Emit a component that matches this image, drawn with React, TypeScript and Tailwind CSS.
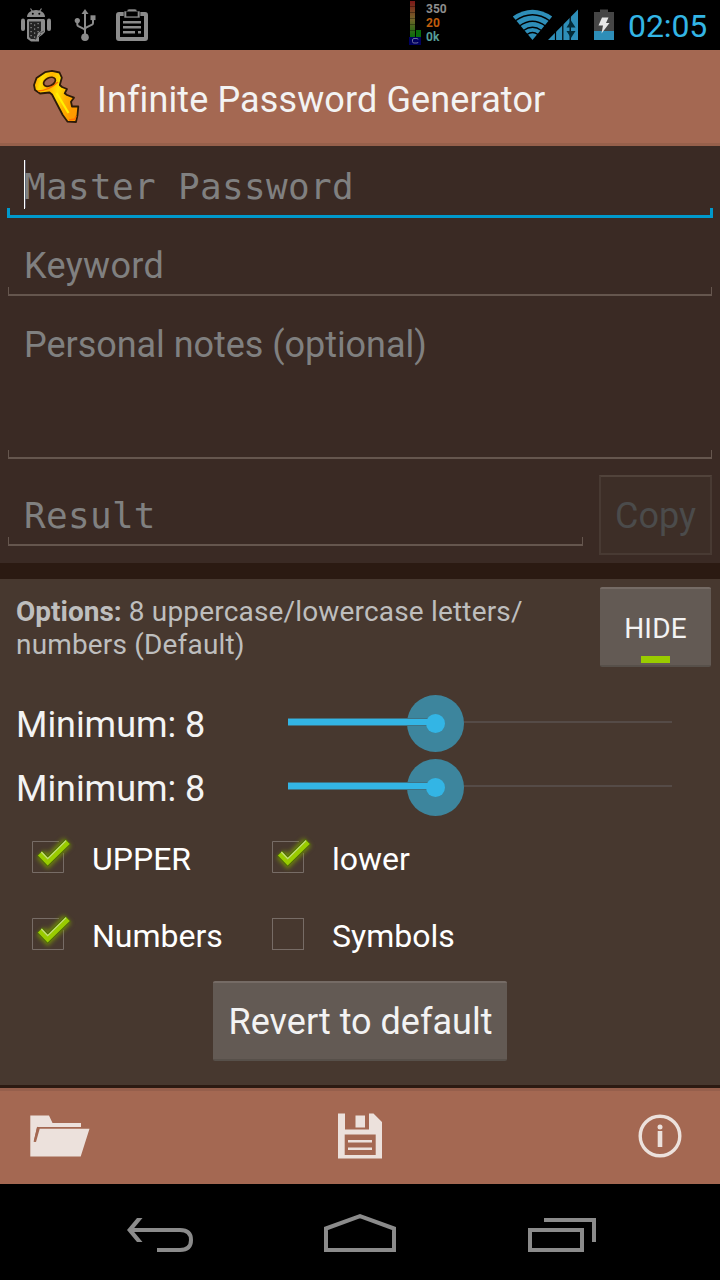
import React from "react";

const SANS = "font-['Roboto',sans-serif]";
const MONO = "font-['DejaVu_Sans_Mono',monospace]";

function StatusBar() {
  return (
    <div className="flex h-[50px] bg-black">
      <svg className="w-[400px] h-[50px] shrink-0" viewBox="0 0 400 50">
        <g fill="#8c8c8c" stroke="none">
          <path d="M27 17c0-4 4-7 9-7s9 3 9 7z" />
          <path d="M30.5 8.5l2 3M41.5 8.5l-2 3" stroke="#8c8c8c" strokeWidth="1.2" />
          <rect x="21" y="18.500" width="4" height="12.500" rx="2" />
          <rect x="47" y="18.500" width="4" height="12.500" rx="2" />
          <path d="M29 19h14c1.500 0 2 .5 2 2v11l-3 3-3 2v4.500h-8l-4-3V21c0-1.500.5-2 2-2z" />
        </g>
        <path d="M29 21.500h12V31l-3 2-2 6h-5l-2-2z" fill="#242424" />
        <g fill="#999">
          {[23, 27, 31, 35].map((y) => (
            <React.Fragment key={y}>
              <rect x="30.500" y={y} width="1.200" height="1.200" />
              <rect x="34" y={y + 1.5} width="1.200" height="1.200" />
              <rect x="37.500" y={y} width="1.200" height="1.200" />
            </React.Fragment>
          ))}
        </g>
        <path d="M35 40l2-3M38 37l3-3M40 33l4-2" stroke="#444" strokeWidth=".8" />
        <circle cx="32.800" cy="13.800" r="1" fill="#000" />
        <circle cx="39.300" cy="13.800" r="1" fill="#000" />

        <g fill="#8c8c8c">
          <path d="M85 9l3.500 5h-7z" />
          <circle cx="85" cy="37.300" r="3.800" />
          <circle cx="77.300" cy="20.500" r="2.600" />
          <rect x="90.500" y="15.300" width="5" height="4.800" />
        </g>
        <path d="M85 13v22M77.300 21v3.500q0 1 1 1.600l5 2.600q1.700.8 1.700 2M93 19v4q0 1-1 1.600l-5.500 2.800q-1.500.8-1.500 2" fill="none" stroke="#8c8c8c" strokeWidth="2" />

        <path d="M124 12v6h16v-6h5q3 0 3 3v23q0 3-3 3h-26q-3 0-3-3V15q0-3 3-3z" fill="#8c8c8c" />
        <rect x="120" y="16" width="24" height="21" fill="#000" />
        <path d="M124 11h3q0-2 2-2h6q2 0 2 2h3v7h-16z" fill="#8c8c8c" stroke="#000" strokeWidth=".6" />
        <rect x="126.300" y="11.500" width="11.400" height="4.900" fill="#000" />
        <path d="M123 22.200h18M123 27.200h18M123 32.300h12M138 32.300h3" stroke="#8c8c8c" strokeWidth="2.400" />
      </svg>
      <svg className="w-[24px] h-[50px] shrink-0" viewBox="400 0 24 50">
        <defs>
          <linearGradient id="load" x1="0" y1="0" x2="0" y2="1">
            <stop offset="0" stopColor="#7c1717" />
            <stop offset=".5" stopColor="#74642a" />
            <stop offset="1" stopColor="#086b0a" />
          </linearGradient>
        </defs>
        <rect x="410" y="1" width="5" height="36" fill="url(#load)" />
        <path d="M410 6.500h5M410 12.500h5M410 18.500h5M410 24.500h5M410 30.500h5" stroke="#000" strokeOpacity=".35" />
        <rect x="416" y="30" width="5" height="7" fill="#086b0a" />
        <rect x="409" y="37" width="12" height="8" fill="#00005f" />
        <path d="M418 39.500q0-1-1-1h-3q-1.500 0-1.500 1.500v1.500q0 1.500 1.500 1.500h3q1 0 1-1" fill="none" stroke="#8585a8" strokeWidth=".8" />
      </svg>
      <div className="w-[86px] shrink-0 pl-[2px] pt-[2px] text-[12px] font-bold leading-[14px] text-[#8e8e8e]">
        <div>350</div>
        <div className="text-[#c05d0c]">20</div>
        <div className="text-[#559f98]">0k</div>
      </div>
      <svg className="w-[108px] h-[50px] shrink-0" viewBox="510 0 108 50">
        <path d="M512.800 16.500Q532.500 3 552.200 16.500L532.500 40z" fill="#2e8eb8" />
        <g fill="none" stroke="#000" strokeWidth="1.300">
          <path d="M515 21Q532.500 8.500 550 21" />
          <path d="M519.500 26Q532.500 16.500 545.500 26" />
          <path d="M523.500 30.500Q532.500 24 541.500 30.500" />
          <path d="M527 34.500Q532.500 30.500 538 34.500" />
        </g>
        <path d="M548 40L578 9.500V40z" fill="#2e8eb8" />
        <path d="M555.500 30v10M562.800 24v16M570.200 16v24" stroke="#000" strokeWidth="1.200" />
        <path d="M571 20.500l4.500 7h-9zM571 38l4.500-7h-9z" fill="#032b38" />
        <path d="M594 12h6V9.500h8V12h6v28h-20z" fill="#454545" />
        <rect x="594" y="31" width="20" height="9" fill="#2e8eb8" />
        <path d="M602 17.500h6.500l-2.500 5.500h3.500l-8 10.500 1.500-8h-4.500z" fill="#e6e6e6" />
      </svg>
      <div className="pl-[10px] pt-px text-[32px] leading-[50px] tracking-[-0.1px] text-[#33b5e5]">02:05</div>
    </div>
  );
}

function KeyIcon() {
  return (
    <svg className="w-[50px] h-[60px] shrink-0" viewBox="32 66 50 60">
      <defs>
        <linearGradient id="gold" x1="0" y1="0" x2="1" y2=".3">
          <stop offset="0" stopColor="#ff8a00" />
          <stop offset=".2" stopColor="#ffdc00" />
          <stop offset=".4" stopColor="#ffb400" />
          <stop offset=".6" stopColor="#ffe000" />
          <stop offset=".8" stopColor="#ffb000" />
          <stop offset="1" stopColor="#ff9a00" />
        </linearGradient>
      </defs>
      <path
        d="M34 84L36.500 77L45 71.200L52 69.800L59.500 71.500L61.800 76.700L59.800 84L62 86L67 88L64.700 92.300L67 94L74 96.700L71 100.700L72 105.500L78.300 105.500L77.500 114L76 121L67.600 120.700L62.700 114L52 93.500L49.500 91.500L40 92.500L35 89Z"
        fill="url(#gold)"
        stroke="#2d1b08"
        strokeWidth="1.800"
        strokeLinejoin="round"
      />
      <path d="M56.500 92l12 20" fill="none" stroke="#fff000" strokeWidth="2.200" />
      <path d="M38 90q10 0 20-9M69 119l6-1 1-3" fill="none" stroke="#ff7000" strokeWidth="1.500" />
      <ellipse cx="49.500" cy="80.800" rx="6.300" ry="4" transform="rotate(-27 49.500 80.800)" fill="#a46852" stroke="#3b1d04" strokeWidth="1.700" />
    </svg>
  );
}

function Underline() {
  return <div className="h-[9px] border-x-[1.500px] border-b-2 border-[#65564e]" />;
}

function SliderRow() {
  return (
    <div className="flex h-16 items-center">
      <div className="w-[272px] pt-[4px] text-[36px] leading-[42px] tracking-[-0.05px]">Minimum: 8</div>
      <div className="relative h-14 w-[384px]">
        <div className="flex h-full items-center pb-[2px]">
          <div className="h-[2px] w-full bg-[#554b47]" />
        </div>
        <div className="absolute left-[118.500px] top-[-0.500px] size-[57px] rounded-full bg-[#3d859d]" />
        <div className="absolute left-0 top-[23px] h-[8px] w-[147px] border-y border-[#3f7384] bg-[#33b5e5]" />
        <div className="absolute left-[137.500px] top-[18.500px] size-[19px] rounded-full bg-[#33b5e5]" />
      </div>
    </div>
  );
}

function CheckOption({ label, checked }: { label: string; checked: boolean }) {
  return (
    <label className="flex h-[77px] w-[240px] items-start">
      <svg className="h-[48px] w-[60px] shrink-0 overflow-visible" viewBox="24 833 60 48">
        {checked ? (
          <>
            <path d="M59 841.500H32.500v31H63.500V853" fill="none" stroke="#776c66" />
            <path d="M40.500 854l7.200 7.500L67.500 842" className="blur-[2px]" fill="none" stroke="#80a500" strokeOpacity=".7" strokeWidth="11" />
            <path d="M39.700 853.200l8 8.300L68.200 841.500" fill="none" stroke="#4c6a06" strokeWidth="7.500" />
            <path d="M40 853.500l7.700 8L67.800 841.900" fill="none" stroke="#99cc00" strokeWidth="5.600" />
            <path d="M41.300 852l6.400 6.700L66 840.600" fill="none" stroke="#c3da80" strokeWidth="1.200" />
          </>
        ) : (
          <rect x="32.500" y="841.500" width="31" height="31" fill="none" stroke="#776c66" />
        )}
      </svg>
      <span className="pl-[8px] pt-[7px] text-[32px] leading-[38px] text-white">{label}</span>
    </label>
  );
}

export default function App() {
  return (
    <div className={`flex h-[1280px] w-[720px] flex-col overflow-hidden bg-black text-[#f3f3f3] ${SANS}`}>
      <StatusBar />

      <header className="flex h-24 items-center border-b-[3px] border-[#96604b] bg-[#a46852] pl-8">
        <KeyIcon />
        <h1 className="whitespace-nowrap pl-[15px] pt-[6px] text-[36px] leading-[42px] tracking-[0.12px]">Infinite Password Generator</h1>
      </header>

      <main className="flex flex-col">
        <section className="flex h-[417px] flex-col bg-[#3a2a24] text-[36px] leading-[42px] text-[#808080]">
          <div className="px-[7px] pt-[14px]">
            <div className="flex h-[48px] pl-[17px]">
              <div className="h-[49px] w-px shrink-0 bg-white" />
              <div className="w-px shrink-0 bg-[#55505c]" />
              <div className={`-ml-[2px] whitespace-pre pt-[6px] tracking-[0.33px] ${MONO}`}>Master Password</div>
            </div>
            <div className="h-[10px] border-x-[3px] border-b-[3px] border-[#0099cc]" />
          </div>
          <div className="px-2 pt-[27px]">
            <div className="pl-4 tracking-[0.35px]">Keyword</div>
            <Underline />
          </div>
          <div className="px-2 pt-[28px]">
            <div className="h-[126px] pl-4 tracking-[-0.04px]">Personal notes (optional)</div>
            <Underline />
          </div>
          <div className="flex gap-4 px-2 pt-4">
            <div className="w-[575px] pt-[20px]">
              <div className={`pl-4 tracking-[0.3px] ${MONO}`}>Result</div>
              <Underline />
            </div>
            <button className="h-20 w-[113px] border-2 border-[#483a33] border-t-[#51433b] bg-[#3d2e27] pt-[2px] text-[#4b4b4b]">Copy</button>
          </div>
        </section>

        <div className="h-4 bg-[#2b1a12]" />

        <section className="flex h-[506px] flex-col bg-[#47382f]">
          <div className="flex h-28 justify-between pl-4 pr-[9px] pt-2">
            <p className="pt-2 text-[28px] leading-[33px] tracking-[0.17px] text-[#bebebe]">
              <b className="tracking-normal">Options:</b> 8 uppercase/lowercase letters/
              <br />
              numbers (Default)
            </p>
            <button className="flex h-20 w-[111px] flex-col items-center rounded-[2px] border-b-2 border-t-2 border-b-[#57504a] border-t-[#756b65] bg-[#635a54] pt-[23px] text-[28px] leading-[34px] tracking-[0.2px]">
              HIDE
              <span className="mt-[10px] h-[7px] w-[29px] shrink-0 bg-[#99cc00]" />
            </button>
          </div>
          <div className="pl-4">
            <SliderRow />
            <SliderRow />
          </div>
          <div className="flex flex-wrap pl-6 pr-[200px] pt-[14px]">
            <CheckOption label="UPPER" checked />
            <CheckOption label="lower" checked />
            <CheckOption label="Numbers" checked />
            <CheckOption label="Symbols" checked={false} />
          </div>
          <div className="-mt-[6px] flex justify-center">
            <button className="h-20 w-[294px] whitespace-nowrap rounded-[2px] border-b-2 border-t-2 border-b-[#57504a] border-t-[#756b65] bg-[#635a54] pl-px pt-[2px] text-[36px] leading-[42px]">Revert to default</button>
          </div>
        </section>
      </main>

      <div className="h-[3px] bg-[#2b1a12]" />

      <footer className="flex h-24 items-center border-t-[3px] border-[#965f4c] bg-[#a46852] pb-[3px] pl-[30px] pr-[38px]">
        <svg className="h-[60px] w-[60px]" viewBox="30 1106 60 60" fill="#ece1dc">
          <path d="M30.300 1115.500H49l3.500 7.500H81v4H37L33.700 1141.500 36 1142 39.700 1128.700H89.500L80.700 1156.500H30.300z" />
          <path d="M38 1127L34.500 1141.700" stroke="#a46852" strokeWidth="1.600" />
        </svg>
        <svg className="ml-[247px] h-[60px] w-[46px]" viewBox="337 1106 46 60" fill="#ece1dc">
          <path fillRule="evenodd" d="M338 1113.500h7V1129.500h24V1113.500h4.500l8.500 8.500v36.500H338zM344.700 1134.500v20.500h31v-20.500z" />
          <path d="M355.500 1115.500h9.500v12h-9.500zM348 1140h24v2.600h-24zM348 1147.500h24v2.600h-24z" />
        </svg>
        <svg className="ml-auto h-[60px] w-[44px]" viewBox="638 1106 44 60">
          <circle cx="660" cy="1136" r="19.800" fill="none" stroke="#ece1dc" strokeWidth="3.400" />
          <circle cx="660" cy="1127" r="2.500" fill="#ece1dc" />
          <rect x="657.700" y="1131" width="4.600" height="16" fill="#ece1dc" />
        </svg>
      </footer>

      <nav className="flex h-24 items-center pl-[124px]">
        <svg className="h-12 w-[472px]" viewBox="124 1208 472 48" fill="none" stroke="#8b8b8b" strokeWidth="4">
          <path d="M130 1230H180q11 0 11 10t-11 10H157" />
          <path d="M137 1218h5.500l-10 12 10 12H137l-10-12z" fill="#8b8b8b" stroke="none" />
          <path d="M326 1228.500L360 1216.200 394 1228.500V1250H326z" />
          <path d="M530 1230h52v20h-52zM544 1220h50v22" />
        </svg>
      </nav>
    </div>
  );
}
